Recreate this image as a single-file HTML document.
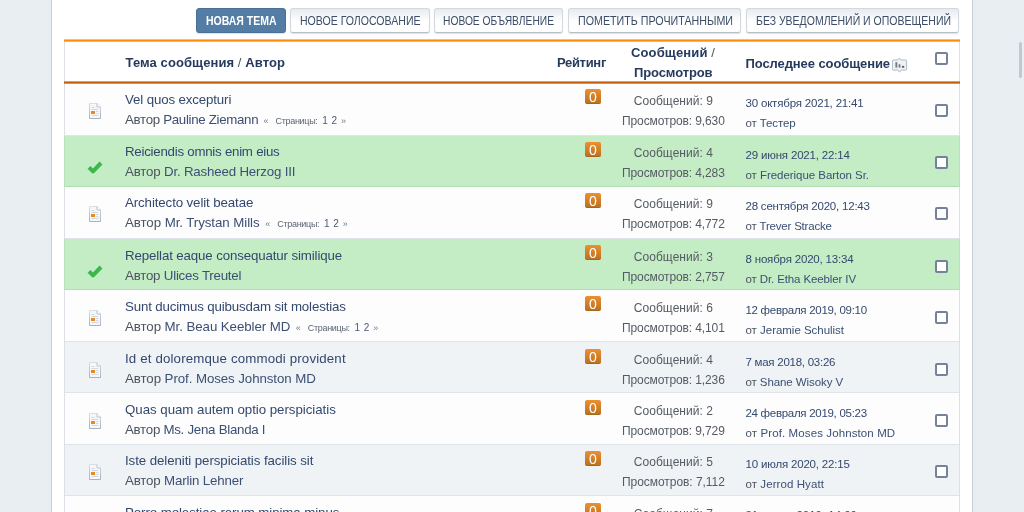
<!DOCTYPE html><html lang="ru"><head><meta charset="utf-8"><title>Форум</title><style>
*{box-sizing:border-box;margin:0;padding:0}
a{text-decoration:none;cursor:pointer}
html,body{width:1024px;height:512px;overflow:hidden}
body{background:#e9eef3;font-family:"Liberation Sans", sans-serif;position:relative;color:#3a4d72}
.wrap{position:absolute;left:51px;top:-10px;width:922px;height:540px;background:#fff;border-left:1px solid #c9ced6;border-right:1px solid #c9ced6}
.page{position:absolute;left:0;top:0;width:1024px;height:512px;overflow:hidden;will-change:transform}
.sb{position:absolute;left:1019px;top:42px;width:3px;height:36px;border-radius:2px;background:#c4c7cf}
.t{position:absolute;white-space:pre;line-height:20px;height:20px}
.btn{position:absolute;display:block;padding:0;font:inherit;cursor:pointer;top:8px;height:25px;border-radius:3px;border:1px solid #d3d8de;border-bottom-color:#b9bfc8;background:linear-gradient(#e6ebf0,#fff 55%,#fff);box-shadow:0 1px 1px rgba(120,130,145,.25)}
.btn.pri{background:#547da6;border-color:#4a7098}
.btn .t{top:2px;font-size:12px;color:#3d4d68;transform-origin:0 50%}
.btn.pri .t{color:#fff;font-weight:700}
.tbl{position:absolute;left:64px;top:40px;width:896px;height:480px;background:#fff;border-left:1px solid #dcdfe6;border-right:1px solid #dcdfe6}
.otop{position:absolute;left:64px;top:39px;width:896px;height:3px;background:linear-gradient(rgba(255,140,10,.6) 0 1px,#ff8c0a 1px 2px,rgba(255,140,10,.67) 2px 3px)}
.obot{position:absolute;left:64px;top:81px;width:896px;height:3px;background:linear-gradient(rgba(192,92,10,.57) 0 1px,#c05c0a 1px 2px,rgba(192,92,10,.67) 2px 3px)}
.h{font-weight:700;font-size:13px;color:#263a5e}
.sl{font-weight:400;color:#4a5363}
.row{position:absolute;left:65px;width:894px;border-bottom:1px solid #dfe3ea}
.row.w{background:#fdfdfd}
.row.g{background:#eff3f6}
.row.ok{background:#c4ecc5;border-bottom-color:#b4ddb6;box-shadow:-1px 0 0 #b9e2bb,1px 0 0 #b9e2bb}
.ti{font-size:13.3px;color:#34486e}
.au{font-size:13.3px;color:#3c4f74}
.au i,.by i{font-style:normal;color:#4d545f}
.pg{font-size:9px;color:#5d6573}
.pg.n{color:#4a5a78;font-size:10px}
.pg.q{color:#737a86}
.mid{font-size:12px;color:#555b64}
.dt{font-size:11.5px;color:#34486e}
.by{font-size:11.5px;color:#3c4f74}
.cb{position:absolute;display:block;margin:0;-webkit-appearance:none;appearance:none;left:934.8px;width:13.4px;height:13.4px;border:2px solid #75829a;border-radius:2px;background:#fff}
.bd{position:absolute;left:520px;width:16px;height:15px;border-radius:2px;background:linear-gradient(#ec9030,#b97020);color:#fff;font-size:14px;line-height:17px;overflow:hidden;text-align:center;box-shadow:inset 0 -1px 0 rgba(90,50,0,.18)}
.ic{position:absolute}
</style></head><body>
<div class="page"><div class="wrap"></div><div class="sb"></div>
<button type="button" class="btn pri" style="left:196px;width:90px"><span class="t" style="left:8.5px;transform:scaleX(0.8736)">НОВАЯ ТЕМА</span></button>
<button type="button" class="btn" style="left:290px;width:140px"><span class="t" style="left:8.5px;transform:scaleX(0.8786)">НОВОЕ ГОЛОСОВАНИЕ</span></button>
<button type="button" class="btn" style="left:434px;width:129px"><span class="t" style="left:8.25px;transform:scaleX(0.8545)">НОВОЕ ОБЪЯВЛЕНИЕ</span></button>
<button type="button" class="btn" style="left:568px;width:173px"><span class="t" style="left:8.5px;transform:scaleX(0.8906)">ПОМЕТИТЬ ПРОЧИТАННЫМИ</span></button>
<button type="button" class="btn" style="left:746px;width:213px"><span class="t" style="left:8.5px;transform:scaleX(0.8751)">БЕЗ УВЕДОМЛЕНИЙ И ОПОВЕЩЕНИЙ</span></button>
<div class="tbl"></div><div class="otop"></div><div class="obot"></div>
<span class="t h" style="left:125.5px;top:53px;letter-spacing:0.089px">Тема сообщения <b class="sl">/</b> Автор</span>
<span class="t h" style="left:557px;top:53px;letter-spacing:-0.315px">Рейтинг</span>
<span class="t h" style="left:631px;top:43px;letter-spacing:0.131px">Сообщений <b class="sl">/</b></span>
<span class="t h" style="left:634px;top:63px;letter-spacing:-0.109px">Просмотров</span>
<span class="t h" style="left:745.5px;top:54px;letter-spacing:-0.092px">Последнее сообщение</span>
<svg class="ic" style="left:892px;top:57px" width="16" height="17" viewBox="0 0 16 17"><path d="M1.3 3h4.5L7.5 1l1.7 2h4.5a.9.9 0 0 1 .9.9v8.3a.9.9 0 0 1-.9.9H9.2L7.5 15.2 5.8 13.1H1.3a.9.9 0 0 1-.9-.9V3.900a.9.9 0 0 1 .9-.9z" fill="#eff2f5" stroke="#b0b9c5"/><rect x="3.400" y="5.200" width="1.900" height="5.400" fill="#757a83"/><rect x="6.600" y="7.300" width="1.800" height="3.300" fill="#757a83"/><rect x="9.900" y="8.900" width="2.300" height="1.800" fill="#565b64"/></svg>
<input type="checkbox" class="cb" style="top:51.7px">
<div class="row w" style="top:84px;height:52px">
<svg class="ic" style="left:24px;top:19px" width="12" height="16" viewBox="0 0 12 16"><defs><linearGradient id="dg0" x1="0" y1="0" x2="0" y2="1"><stop offset="0" stop-color="#d9dde5"/><stop offset="1" stop-color="#a9b1bf"/></linearGradient></defs><path d="M.5.5h7.5l3.5 3.5v11.5H.5z" fill="#f6f7f9" stroke="url(#dg0)"/><path d="M8 .5v3.5h3.5" fill="#fff" stroke="#b9c0cc"/><path d="M2.5 4.5h3M2.5 6.5h6.5M7 8.5h2.5M7 10.5h2.5M2.5 12.5h7" stroke="#d3d7de" stroke-width="1"/><rect x="2" y="8" width="4" height="3" fill="#e58a25"/></svg>
<a class="t ti" style="left:60.0px;top:6px;letter-spacing:-0.135px">Vel quos excepturi</a>
<span class="t au" style="left:60.0px;top:26px;letter-spacing:-0.315px"><i>Автор</i> Pauline Ziemann</span>
<span class="t pg q" style="left:198.60px;top:27px">«</span><span class="t pg" style="left:210.50px;top:27px;letter-spacing:-0.3px">Страницы:</span><span class="t pg n" style="left:257.20px;top:27px">1</span><span class="t pg n" style="left:266.60px;top:27px">2</span><span class="t pg q" style="left:275.90px;top:27px">»</span>
<div class="bd" style="top:5px">0</div>
<span class="t mid" style="left:568.775px;top:7px;letter-spacing:0.047px">Сообщений: 9</span>
<span class="t mid" style="left:557.025px;top:27px;letter-spacing:-0.107px">Просмотров: 9,630</span>
<span class="t dt" style="left:680.5px;top:9px;letter-spacing:-0.185px">30 октября 2021, 21:41</span>
<span class="t by" style="left:680.5px;top:29px;letter-spacing:-0.118px"><i>от</i> Тестер</span>
<input type="checkbox" class="cb" style="top:20px;left:869.8px">
</div>
<div class="row ok" style="top:136px;height:51px">
<svg class="ic" style="left:22px;top:24px" width="16" height="14" viewBox="0 0 16 14"><path d="M2 7.3l4 4 8-8.3" fill="none" stroke="#3cb74b" stroke-width="4" stroke-linejoin="round"/></svg>
<a class="t ti" style="left:60.0px;top:6px;letter-spacing:-0.254px">Reiciendis omnis enim eius</a>
<span class="t au" style="left:60.0px;top:26px;letter-spacing:-0.181px"><i>Автор</i> Dr. Rasheed Herzog III</span>
<div class="bd" style="top:6px">0</div>
<span class="t mid" style="left:568.775px;top:7px;letter-spacing:0.047px">Сообщений: 4</span>
<span class="t mid" style="left:557.025px;top:27px;letter-spacing:-0.107px">Просмотров: 4,283</span>
<span class="t dt" style="left:680.5px;top:9px;letter-spacing:-0.174px">29 июня 2021, 22:14</span>
<span class="t by" style="left:680.5px;top:29px;letter-spacing:-0.044px"><i>от</i> Frederique Barton Sr.</span>
<input type="checkbox" class="cb" style="top:20px;left:869.8px">
</div>
<div class="row w" style="top:187px;height:52px">
<svg class="ic" style="left:24px;top:19px" width="12" height="16" viewBox="0 0 12 16"><defs><linearGradient id="dg2" x1="0" y1="0" x2="0" y2="1"><stop offset="0" stop-color="#d9dde5"/><stop offset="1" stop-color="#a9b1bf"/></linearGradient></defs><path d="M.5.5h7.5l3.5 3.5v11.5H.5z" fill="#f6f7f9" stroke="url(#dg2)"/><path d="M8 .5v3.5h3.5" fill="#fff" stroke="#b9c0cc"/><path d="M2.5 4.5h3M2.5 6.5h6.5M7 8.5h2.5M7 10.5h2.5M2.5 12.5h7" stroke="#d3d7de" stroke-width="1"/><rect x="2" y="8" width="4" height="3" fill="#e58a25"/></svg>
<a class="t ti" style="left:60.0px;top:6px;letter-spacing:-0.112px">Architecto velit beatae</a>
<span class="t au" style="left:60.0px;top:26px;letter-spacing:-0.07px"><i>Автор</i> Mr. Trystan Mills</span>
<span class="t pg q" style="left:200.35px;top:27px">«</span><span class="t pg" style="left:212.25px;top:27px;letter-spacing:-0.3px">Страницы:</span><span class="t pg n" style="left:258.95px;top:27px">1</span><span class="t pg n" style="left:268.35px;top:27px">2</span><span class="t pg q" style="left:277.65px;top:27px">»</span>
<div class="bd" style="top:6px">0</div>
<span class="t mid" style="left:568.775px;top:7px;letter-spacing:0.047px">Сообщений: 9</span>
<span class="t mid" style="left:557.025px;top:27px;letter-spacing:-0.107px">Просмотров: 4,772</span>
<span class="t dt" style="left:680.5px;top:9px;letter-spacing:-0.207px">28 сентября 2020, 12:43</span>
<span class="t by" style="left:680.5px;top:29px;letter-spacing:-0.197px"><i>от</i> Trever Stracke</span>
<input type="checkbox" class="cb" style="top:20px;left:869.8px">
</div>
<div class="row ok" style="top:239px;height:51px">
<svg class="ic" style="left:22px;top:25px" width="16" height="14" viewBox="0 0 16 14"><path d="M2 7.3l4 4 8-8.3" fill="none" stroke="#3cb74b" stroke-width="4" stroke-linejoin="round"/></svg>
<a class="t ti" style="left:60.0px;top:7px;letter-spacing:-0.132px">Repellat eaque consequatur similique</a>
<span class="t au" style="left:60.0px;top:27px;letter-spacing:-0.219px"><i>Автор</i> Ulices Treutel</span>
<div class="bd" style="top:6px">0</div>
<span class="t mid" style="left:568.775px;top:8px;letter-spacing:0.047px">Сообщений: 3</span>
<span class="t mid" style="left:557.025px;top:28px;letter-spacing:-0.107px">Просмотров: 2,757</span>
<span class="t dt" style="left:680.5px;top:10px;letter-spacing:-0.18px">8 ноября 2020, 13:34</span>
<span class="t by" style="left:680.5px;top:30px;letter-spacing:-0.116px"><i>от</i> Dr. Etha Keebler IV</span>
<input type="checkbox" class="cb" style="top:21px;left:869.8px">
</div>
<div class="row w" style="top:290px;height:52px">
<svg class="ic" style="left:24px;top:20px" width="12" height="16" viewBox="0 0 12 16"><defs><linearGradient id="dg4" x1="0" y1="0" x2="0" y2="1"><stop offset="0" stop-color="#d9dde5"/><stop offset="1" stop-color="#a9b1bf"/></linearGradient></defs><path d="M.5.5h7.5l3.5 3.5v11.5H.5z" fill="#f6f7f9" stroke="url(#dg4)"/><path d="M8 .5v3.5h3.5" fill="#fff" stroke="#b9c0cc"/><path d="M2.5 4.5h3M2.5 6.5h6.5M7 8.5h2.5M7 10.5h2.5M2.5 12.5h7" stroke="#d3d7de" stroke-width="1"/><rect x="2" y="8" width="4" height="3" fill="#e58a25"/></svg>
<a class="t ti" style="left:60.0px;top:7px;letter-spacing:-0.15px">Sunt ducimus quibusdam sit molestias</a>
<span class="t au" style="left:60.0px;top:27px;letter-spacing:-0.077px"><i>Автор</i> Mr. Beau Keebler MD</span>
<span class="t pg q" style="left:230.85px;top:28px">«</span><span class="t pg" style="left:242.75px;top:28px;letter-spacing:-0.3px">Страницы:</span><span class="t pg n" style="left:289.45px;top:28px">1</span><span class="t pg n" style="left:298.85px;top:28px">2</span><span class="t pg q" style="left:308.15px;top:28px">»</span>
<div class="bd" style="top:6px">0</div>
<span class="t mid" style="left:568.775px;top:8px;letter-spacing:0.047px">Сообщений: 6</span>
<span class="t mid" style="left:557.025px;top:28px;letter-spacing:-0.107px">Просмотров: 4,101</span>
<span class="t dt" style="left:680.5px;top:10px;letter-spacing:-0.29px">12 февраля 2019, 09:10</span>
<span class="t by" style="left:680.5px;top:30px;letter-spacing:-0.025px"><i>от</i> Jeramie Schulist</span>
<input type="checkbox" class="cb" style="top:21px;left:869.8px">
</div>
<div class="row g" style="top:342px;height:51px">
<svg class="ic" style="left:24px;top:20px" width="12" height="16" viewBox="0 0 12 16"><defs><linearGradient id="dg5" x1="0" y1="0" x2="0" y2="1"><stop offset="0" stop-color="#d9dde5"/><stop offset="1" stop-color="#a9b1bf"/></linearGradient></defs><path d="M.5.5h7.5l3.5 3.5v11.5H.5z" fill="#f6f7f9" stroke="url(#dg5)"/><path d="M8 .5v3.5h3.5" fill="#fff" stroke="#b9c0cc"/><path d="M2.5 4.5h3M2.5 6.5h6.5M7 8.5h2.5M7 10.5h2.5M2.5 12.5h7" stroke="#d3d7de" stroke-width="1"/><rect x="2" y="8" width="4" height="3" fill="#e58a25"/></svg>
<a class="t ti" style="left:60.0px;top:7px;letter-spacing:0.145px">Id et doloremque commodi provident</a>
<span class="t au" style="left:60.0px;top:27px;letter-spacing:-0.079px"><i>Автор</i> Prof. Moses Johnston MD</span>
<div class="bd" style="top:7px">0</div>
<span class="t mid" style="left:568.775px;top:8px;letter-spacing:0.047px">Сообщений: 4</span>
<span class="t mid" style="left:557.025px;top:28px;letter-spacing:-0.107px">Просмотров: 1,236</span>
<span class="t dt" style="left:680.5px;top:10px;letter-spacing:-0.255px">7 мая 2018, 03:26</span>
<span class="t by" style="left:680.5px;top:30px;letter-spacing:-0.087px"><i>от</i> Shane Wisoky V</span>
<input type="checkbox" class="cb" style="top:21px;left:869.8px">
</div>
<div class="row w" style="top:393px;height:52px">
<svg class="ic" style="left:24px;top:20px" width="12" height="16" viewBox="0 0 12 16"><defs><linearGradient id="dg6" x1="0" y1="0" x2="0" y2="1"><stop offset="0" stop-color="#d9dde5"/><stop offset="1" stop-color="#a9b1bf"/></linearGradient></defs><path d="M.5.5h7.5l3.5 3.5v11.5H.5z" fill="#f6f7f9" stroke="url(#dg6)"/><path d="M8 .5v3.5h3.5" fill="#fff" stroke="#b9c0cc"/><path d="M2.5 4.5h3M2.5 6.5h6.5M7 8.5h2.5M7 10.5h2.5M2.5 12.5h7" stroke="#d3d7de" stroke-width="1"/><rect x="2" y="8" width="4" height="3" fill="#e58a25"/></svg>
<a class="t ti" style="left:60.0px;top:7px;letter-spacing:-0.04px">Quas quam autem optio perspiciatis</a>
<span class="t au" style="left:60.0px;top:27px;letter-spacing:-0.272px"><i>Автор</i> Ms. Jena Blanda I</span>
<div class="bd" style="top:7px">0</div>
<span class="t mid" style="left:568.775px;top:8px;letter-spacing:0.047px">Сообщений: 2</span>
<span class="t mid" style="left:557.025px;top:28px;letter-spacing:-0.107px">Просмотров: 9,729</span>
<span class="t dt" style="left:680.5px;top:10px;letter-spacing:-0.29px">24 февраля 2019, 05:23</span>
<span class="t by" style="left:680.5px;top:30px;letter-spacing:0.109px"><i>от</i> Prof. Moses Johnston MD</span>
<input type="checkbox" class="cb" style="top:21px;left:869.8px">
</div>
<div class="row g" style="top:445px;height:51px">
<svg class="ic" style="left:24px;top:19px" width="12" height="16" viewBox="0 0 12 16"><defs><linearGradient id="dg7" x1="0" y1="0" x2="0" y2="1"><stop offset="0" stop-color="#d9dde5"/><stop offset="1" stop-color="#a9b1bf"/></linearGradient></defs><path d="M.5.5h7.5l3.5 3.5v11.5H.5z" fill="#f6f7f9" stroke="url(#dg7)"/><path d="M8 .5v3.5h3.5" fill="#fff" stroke="#b9c0cc"/><path d="M2.5 4.5h3M2.5 6.5h6.5M7 8.5h2.5M7 10.5h2.5M2.5 12.5h7" stroke="#d3d7de" stroke-width="1"/><rect x="2" y="8" width="4" height="3" fill="#e58a25"/></svg>
<a class="t ti" style="left:60.0px;top:6px;letter-spacing:-0.083px">Iste deleniti perspiciatis facilis sit</a>
<span class="t au" style="left:60.0px;top:26px;letter-spacing:-0.164px"><i>Автор</i> Marlin Lehner</span>
<div class="bd" style="top:6px">0</div>
<span class="t mid" style="left:568.775px;top:7px;letter-spacing:0.047px">Сообщений: 5</span>
<span class="t mid" style="left:557.025px;top:27px;letter-spacing:-0.054px">Просмотров: 7,112</span>
<span class="t dt" style="left:680.5px;top:9px;letter-spacing:-0.18px">10 июля 2020, 22:15</span>
<span class="t by" style="left:680.5px;top:29px;letter-spacing:0.083px"><i>от</i> Jerrod Hyatt</span>
<input type="checkbox" class="cb" style="top:20px;left:869.8px">
</div>
<div class="row w" style="top:496px;height:52px">
<svg class="ic" style="left:24px;top:20px" width="12" height="16" viewBox="0 0 12 16"><defs><linearGradient id="dg8" x1="0" y1="0" x2="0" y2="1"><stop offset="0" stop-color="#d9dde5"/><stop offset="1" stop-color="#a9b1bf"/></linearGradient></defs><path d="M.5.5h7.5l3.5 3.5v11.5H.5z" fill="#f6f7f9" stroke="url(#dg8)"/><path d="M8 .5v3.5h3.5" fill="#fff" stroke="#b9c0cc"/><path d="M2.5 4.5h3M2.5 6.5h6.5M7 8.5h2.5M7 10.5h2.5M2.5 12.5h7" stroke="#d3d7de" stroke-width="1"/><rect x="2" y="8" width="4" height="3" fill="#e58a25"/></svg>
<a class="t ti" style="left:60.0px;top:7px;letter-spacing:-0.088px">Porro molestiae rerum minima minus</a>
<span class="t au" style="left:60.0px;top:27px;letter-spacing:-1.587px"><i>Автор</i> Dr. Kaley Stamm</span>
<div class="bd" style="top:7px">0</div>
<span class="t mid" style="left:568.775px;top:8px;letter-spacing:0.047px">Сообщений: 7</span>
<span class="t mid" style="left:557.025px;top:28px;letter-spacing:-0.107px">Просмотров: 3,418</span>
<span class="t dt" style="left:680.5px;top:9px;letter-spacing:-0.021px">31 марта 2019, 14:09</span>
<span class="t by" style="left:680.5px;top:30px;letter-spacing:-0.154px"><i>от</i> Lonie Parker</span>
<input type="checkbox" class="cb" style="top:21px;left:869.8px">
</div>
</div></body></html>
